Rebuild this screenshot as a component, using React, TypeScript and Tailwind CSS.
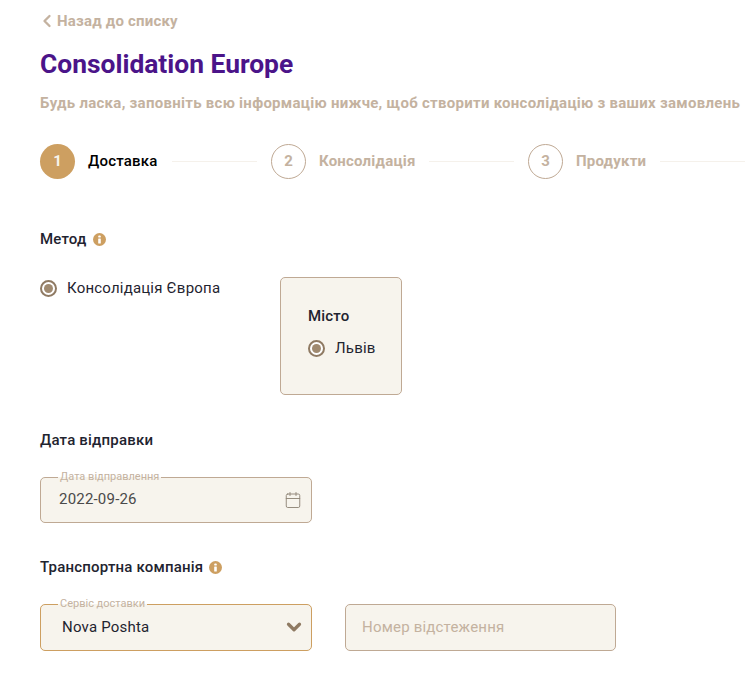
import { ChevronLeft, ChevronDown, Calendar } from 'lucide-react';

function InfoDot() {
  return (
    <span className="ml-[6px] flex h-[13px] w-[13px] items-center justify-center rounded-full bg-[#cd9f61]">
      <svg viewBox="0 0 13 13" className="h-[13px] w-[13px]">
        <rect x="5.2" y="2.4" width="2.6" height="2.2" rx="0.9" fill="#fff" />
        <rect x="5.2" y="5.6" width="2.6" height="5" rx="0.5" fill="#fff" />
      </svg>
    </span>
  );
}

function Radio() {
  return (
    <span className="flex h-[17px] w-[17px] shrink-0 items-center justify-center rounded-full border-2 border-[#8f7a63] bg-white">
      <span className="h-[9px] w-[9px] rounded-full bg-[#a08a70]" />
    </span>
  );
}

function Step({ num, label, active, textWidth, lineWidth }: { num: number; label: string; active?: boolean; textWidth: string; lineWidth: string }) {
  return (
    <div className="flex shrink-0 items-center">
      {active ? (
        <span className="flex h-[35px] w-[35px] items-center justify-center rounded-full bg-[#cd9f61] text-[15px] font-bold text-[#f7f4ed]">{num}</span>
      ) : (
        <span className="flex h-[35px] w-[35px] items-center justify-center rounded-full border border-[#bfa994] text-[15px] font-bold text-[#c4b2a0]">{num}</span>
      )}
      <span className={`ml-[13px] whitespace-nowrap text-[15px] tracking-[0.2px] ${textWidth} ${active ? 'font-medium text-black' : 'font-bold text-[#c4b2a0]'}`}>{label}</span>
      <span className={`ml-[14px] h-[1px] bg-[#f5f1eb] ${lineWidth}`} />
    </div>
  );
}

export default function App() {
  return (
    <div className="h-[692px] w-[746px] overflow-hidden bg-white pl-10 font-['Roboto',sans-serif] text-[#1f2430]">
      {/* Back link */}
      <div className="mt-[14px] flex h-[14px] items-center pt-[1px] text-[15px] font-bold tracking-[0.2px] text-[#c4b2a0]">
        <ChevronLeft className="ml-[-3px] mt-[-2px] h-[20px] w-[20px]" strokeWidth={2.8} />
        <span>Назад до списку</span>
      </div>

      <h1 className="mt-[17px] text-[26.4px] leading-[38px] font-bold text-[#4b1489]">Consolidation Europe</h1>

      <p className="mt-[10px] whitespace-nowrap text-[15px] leading-[20px] font-bold tracking-[0.28px] text-[#c4b2a0]">
        Будь ласка, заповніть всю інформацію нижче, щоб створити консолідацію з ваших замовлень
      </p>

      {/* Stepper */}
      <div className="mt-[31px] flex items-center gap-[14px]">
        <Step num={1} label="Доставка" active textWidth="w-[70px]" lineWidth="w-[85px]" />
        <Step num={2} label="Консолідація" textWidth="w-[96px]" lineWidth="w-[85px]" />
        <Step num={3} label="Продукти" textWidth="w-[70px]" lineWidth="w-[85px]" />
      </div>

      {/* Method */}
      <div className="mt-[51px] flex h-[18px] items-center text-[15px] font-medium tracking-[0.2px]">
        Метод
        <InfoDot />
      </div>

      <div className="mt-[29px] flex items-start">
        <label className="flex w-[240px] items-center text-[15px] tracking-[0.2px]">
          <Radio />
          <span className="ml-[10px]">Консолідація Європа</span>
        </label>
        <div className="h-[118px] w-[122px] rounded-[5px] border border-[#bfa994] bg-[#f7f4ed] pl-[27px] pt-[29px]">
          <div className="text-[15px] leading-[18px] font-medium tracking-[0.2px]">Місто</div>
          <label className="mt-[14px] flex items-center text-[15px] leading-[18px] tracking-[0.2px]">
            <Radio />
            <span className="ml-[10px]">Львів</span>
          </label>
        </div>
      </div>

      {/* Date */}
      <div className="mt-[36px] h-[18px] text-[15px] leading-[18px] font-medium tracking-[0.2px]">Дата відправки</div>

      <fieldset className="mt-[22px] flex h-[52px] w-[272px] items-center justify-between rounded-[5px] border border-[#bfa994] bg-[#f7f4ed] pl-[18px] pr-[9px] pb-[6px]">
        <legend className="ml-[-1px] px-[2px] text-[11px] leading-[12px] text-[#c4b2a0]">Дата відправлення</legend>
        <span className="text-[15px] tracking-[0.2px] text-[#4a4a4a]">2022-09-26</span>
        <Calendar className="h-[18px] w-[18px] text-[#8f8577]" strokeWidth={1.25} />
      </fieldset>

      {/* Carrier */}
      <div className="mt-[35px] flex h-[18px] items-center text-[15px] font-medium tracking-[0.2px]">
        Транспортна компанія
        <InfoDot />
      </div>

      <div className="mt-[22px] flex items-end gap-[33px]">
        <fieldset className="flex h-[53px] w-[272px] items-center justify-between rounded-[5px] border border-[#cd9f61] bg-[#f7f4ed] pl-[21px] pr-[6px] pb-[6px]">
          <legend className="ml-[-4px] px-[2px] text-[11px] leading-[12px] text-[#c4b2a0]">Сервіс доставки</legend>
          <span className="text-[15px] tracking-[0.2px]">Nova Poshta</span>
          <ChevronDown className="h-[22px] w-[22px] text-[#8f7a63]" strokeWidth={3.5} />
        </fieldset>
        <div className="flex h-[47px] w-[271px] items-center rounded-[5px] border border-[#bfa994] bg-[#f7f4ed] pl-[16px] text-[15px] tracking-[0.2px] text-[#c4b2a0]">
          Номер відстеження
        </div>
      </div>
    </div>
  );
}
